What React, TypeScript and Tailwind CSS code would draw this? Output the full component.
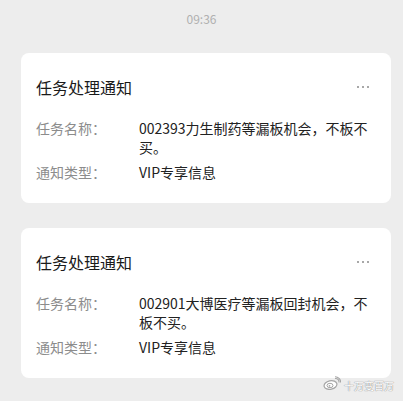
import React from "react";

function Card({ name }: { name: string }) {
  return (
    <div className="ml-[21px] mr-[12px] bg-white rounded-[8px] pl-[15px] pr-[17px] pt-[22px] pb-[21px]">
      <div className="flex items-center justify-between">
        <div className="text-[16px] leading-[24px] text-[#1a1a1a]">任务处理通知</div>
        <div className="flex gap-[3px] pr-[5px]">
          <span className="w-[2px] h-[2px] bg-[#a8a8a8]" />
          <span className="w-[2px] h-[2px] bg-[#a8a8a8]" />
          <span className="w-[2px] h-[2px] bg-[#a8a8a8]" />
        </div>
      </div>
      <div className="mt-[20px] flex flex-col gap-[6px] text-[14px] leading-[19px]">
        <div className="flex">
          <div className="w-[103px] shrink-0 text-[#8c8c8c]">任务名称：</div>
          <div className="flex-1 text-[#222]">{name}</div>
        </div>
        <div className="flex">
          <div className="w-[103px] shrink-0 text-[#8c8c8c]">通知类型：</div>
          <div className="flex-1 text-[#222]">VIP专享信息</div>
        </div>
      </div>
    </div>
  );
}

export default function App() {
  return (
    <div className="relative w-[403px] h-[401px] overflow-hidden bg-[#ededed] font-['Noto_Sans_CJK_SC',sans-serif]">
      <div className="pt-[11px] text-center text-[12px] leading-[16px] text-[#b0b0b0]">09:36</div>
      <div className="mt-[26px]">
        <Card name="002393力生制药等漏板机会，不板不买。" />
      </div>
      <div className="mt-[25px]">
        <Card name="002901大博医疗等漏板回封机会，不板不买。" />
      </div>
      <div className="absolute right-[9px] bottom-[9px] flex items-center gap-[3px]">
        <svg width="18" height="14" viewBox="0 0 18 14">
          <ellipse cx="7.5" cy="9" rx="6.5" ry="4.3" fill="#fff" stroke="#a5a5a5" strokeWidth="1.2" transform="rotate(-12 7.5 9)" />
          <ellipse cx="7" cy="9.5" rx="3" ry="2.2" fill="none" stroke="#a5a5a5" strokeWidth="1" />
          <circle cx="6.5" cy="9.8" r="0.9" fill="#a5a5a5" />
          <path d="M12 2.5 a3.5 3.5 0 0 1 4 4" fill="none" stroke="#a5a5a5" strokeWidth="1.1" />
          <path d="M12 0.8 a5.5 5.5 0 0 1 5.6 5.8" fill="none" stroke="#a5a5a5" strokeWidth="1.1" />
        </svg>
        <span className="text-[10px] leading-[12px] text-white [text-shadow:0_0_1px_#8a8a8a,0_0_1px_#8a8a8a] mt-[6px]">十万变百万</span>
      </div>
    </div>
  );
}
